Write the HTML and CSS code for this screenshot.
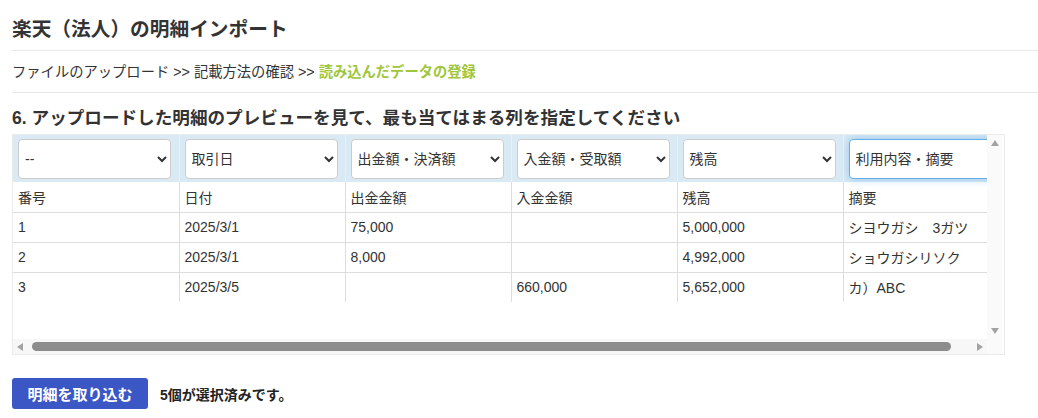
FILE: index.html
```html
<!DOCTYPE html>
<html lang="ja">

<head>
  <meta charset="UTF-8">
  <meta name="viewport" content="width=device-width, initial-scale=1.0">
  <title>楽天（法人）の明細インポート</title>
  <link rel="stylesheet" href="styles.css">
</head>

<body>

  <h1 class="page-title">楽天（法人）の明細インポート</h1>

  <div class="steps">
    ファイルのアップロード &gt;&gt; 記載方法の確認 &gt;&gt; <span class="step-current">読み込んだデータの登録</span>
  </div>

  <h2 class="section-title">6. アップロードした明細のプレビューを見て、最も当てはまる列を指定してください</h2>

  <div class="preview">
    <div class="preview-body">
      <table class="preview-table">
        <thead>
          <tr class="col-select">
            <th><select><option>--</option></select></th>
            <th><select><option>取引日</option></select></th>
            <th><select><option>出金額・決済額</option></select></th>
            <th><select><option>入金額・受取額</option></select></th>
            <th><select><option>残高</option></select></th>
            <th><select class="is-focus"><option>利用内容・摘要</option></select></th>
          </tr>
        </thead>
        <tbody>
          <tr>
            <td>番号</td>
            <td>日付</td>
            <td>出金金額</td>
            <td>入金金額</td>
            <td>残高</td>
            <td>摘要</td>
          </tr>
          <tr>
            <td>1</td>
            <td>2025/3/1</td>
            <td>75,000</td>
            <td></td>
            <td>5,000,000</td>
            <td>シヨウガシ　3ガツ</td>
          </tr>
          <tr>
            <td>2</td>
            <td>2025/3/1</td>
            <td>8,000</td>
            <td></td>
            <td>4,992,000</td>
            <td>ショウガシリソク</td>
          </tr>
          <tr>
            <td>3</td>
            <td>2025/3/5</td>
            <td></td>
            <td>660,000</td>
            <td>5,652,000</td>
            <td>カ）ABC</td>
          </tr>
        </tbody>
      </table>
    </div>

    <!-- scrollbars drawn by hand -->
    <div class="vbar">
      <span class="arrow arrow-up"></span>
      <span class="arrow arrow-down"></span>
    </div>
    <div class="hbar">
      <span class="arrow arrow-left"></span>
      <span class="hbar-thumb"></span>
      <span class="arrow arrow-right"></span>
    </div>
    <div class="corner"></div>
  </div>

  <div class="actions">
    <button class="button">明細を取り込む</button>
    <span class="selected-count">5個が選択済みです。</span>
  </div>

</body>

</html>
```

FILE: styles.css
```css
body {
  margin: 0;
  padding: 0 0 0 12px;
  font-family: "Liberation Sans", "Noto Sans CJK JP", sans-serif;
  color: #333;
  background-color: #fff;
}

.page-title {
  margin: 0;
  padding: 17px 0 9px;
  font-size: 19.7px;
  line-height: 24px;
  font-weight: bold;
  color: #333;
  border-bottom: 1px solid #e8e8e8;
}

.steps {
  padding: 11px 0 10px;
  font-size: 14.3px;
  line-height: 20px;
  border-bottom: 1px solid #e8e8e8;
}

.step-current {
  color: #9fc63c;
  font-weight: bold;
}

.section-title {
  margin: 13px 0 4px;
  font-size: 17.6px;
  line-height: 24px;
  font-weight: bold;
  color: #333;
}

.preview {
  display: grid;
  grid-template-columns: 974px 15px;
  grid-template-rows: 204px 15px;
  width: 991px;
  border: 1px solid #ebebeb;
}

.preview-body {
  overflow: hidden;
}

.preview-table {
  border-collapse: collapse;
  table-layout: fixed;
  width: 996px;
}

.preview-table th,
.preview-table td {
  width: 166px;
  box-sizing: border-box;
  border-right: 1px solid #ddd;
  text-align: left;
}

.col-select th {
  padding: 4px 5px 3px;
  background-color: #d9eaf5;
  border-right-color: #e9f1f7;
}

.col-select select {
  width: 153px;
  height: 40px;
  padding: 0 2px;
  font-family: inherit;
  font-size: 14px;
  color: #333;
  background-color: #fff;
  border: 1px solid #ccc;
  border-radius: 4px;
}

.col-select select.is-focus {
  border-color: #66afe9;
  box-shadow: 0 0 8px rgba(102, 175, 233, 0.6);
}

.preview-table td {
  height: 30px;
  padding: 0 5px;
  font-size: 14px;
  color: #333;
  white-space: nowrap;
  overflow: hidden;
}

.preview-table tbody tr {
  border-bottom: 1px solid #ddd;
}

.preview-table tbody tr:last-child {
  border-bottom: none;
}

.vbar {
  display: flex;
  flex-direction: column;
  align-items: center;
  justify-content: space-between;
  padding: 5px 0 5px;
  background-color: #fafafa;
}

.hbar {
  display: flex;
  align-items: center;
  padding: 0 4px 0 4px;
  background-color: #f7f7f7;
}

.hbar-thumb {
  width: 919px;
  height: 9px;
  margin-left: 9px;
  border-radius: 5px;
  background-color: #8c8c8c;
}

.corner {
  background-color: #fafafa;
}

.arrow {
  width: 0;
  height: 0;
  border-style: solid;
  border-color: transparent;
}

.arrow-up {
  border-width: 0 4px 6px;
  border-bottom-color: #a3a3a3;
}

.arrow-down {
  border-width: 6px 4px 0;
  border-top-color: #a3a3a3;
}

.arrow-left {
  border-width: 4px 6px 4px 0;
  border-right-color: #a3a3a3;
}

.arrow-right {
  margin-left: auto;
  border-width: 4px 0 4px 6px;
  border-left-color: #a3a3a3;
}

.actions {
  display: flex;
  align-items: center;
  gap: 12px;
  margin-top: 23px;
}

.button {
  width: 136px;
  height: 31px;
  padding: 0;
  font-family: inherit;
  font-size: 15px;
  font-weight: bold;
  color: #fff;
  background-color: #3b56c5;
  border: none;
  border-radius: 3px;
  cursor: pointer;
}

.selected-count {
  font-size: 14px;
  font-weight: bold;
  color: #222;
}
```
